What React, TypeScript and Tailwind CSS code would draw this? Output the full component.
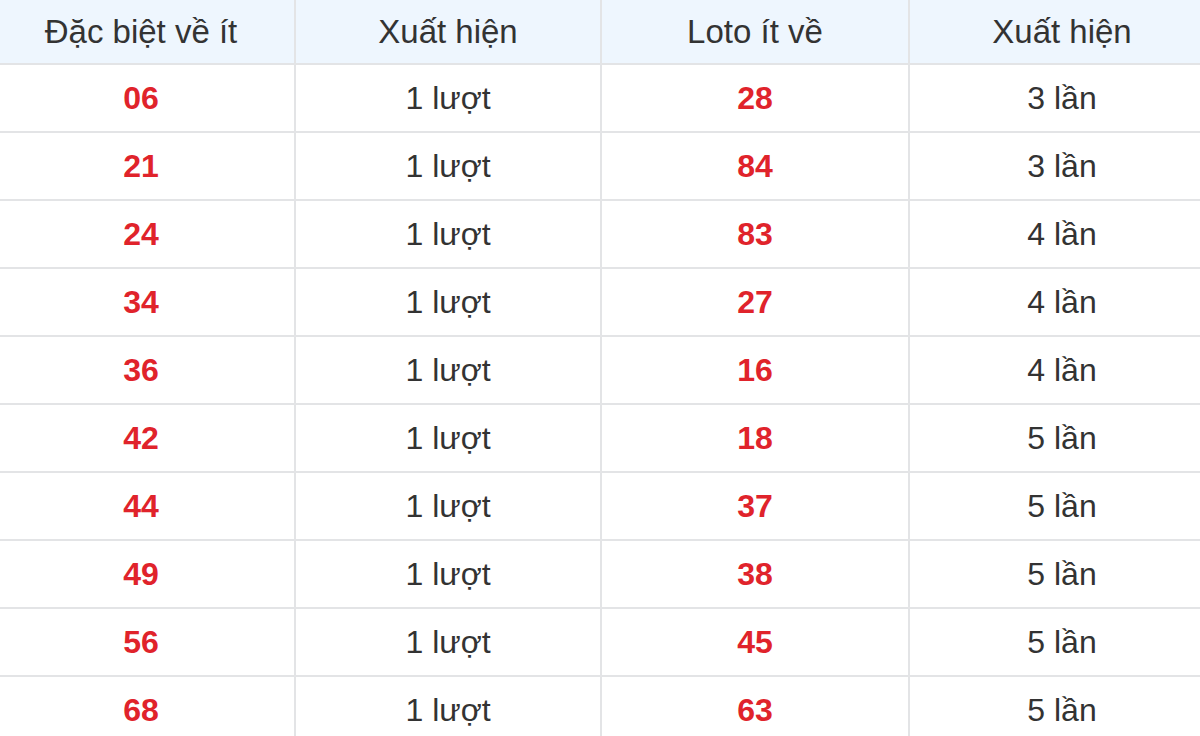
const rows = [
  ['06', '1 lượt', '28', '3 lần'],
  ['21', '1 lượt', '84', '3 lần'],
  ['24', '1 lượt', '83', '4 lần'],
  ['34', '1 lượt', '27', '4 lần'],
  ['36', '1 lượt', '16', '4 lần'],
  ['42', '1 lượt', '18', '5 lần'],
  ['44', '1 lượt', '37', '5 lần'],
  ['49', '1 lượt', '38', '5 lần'],
  ['56', '1 lượt', '45', '5 lần'],
  ['68', '1 lượt', '63', '5 lần'],
]

const heads = ['Đặc biệt về ít', 'Xuất hiện', 'Loto ít về', 'Xuất hiện']

export default function App() {
  return (
    <div className="w-[1200px] h-[736px] overflow-hidden bg-white font-['Liberation_Sans',Arial,sans-serif] text-[32px] text-[#333]">
      <div className="-ml-[12px] w-[1226px]">
        <div className="grid grid-cols-[306px_306px_308px_306px] h-[63px] bg-[#eef6fe] text-[33px]">
          {heads.map((h, i) => (
            <div key={i} className={`flex items-center justify-center ${i > 0 ? 'border-l-2 border-[#e3e4e6]' : ''}`}>
              {h}
            </div>
          ))}
        </div>
        {rows.map((r, idx) => (
          <div key={idx} className="grid grid-cols-[306px_306px_308px_306px] h-[68px] border-t-2 border-[#e3e4e6]">
            {r.map((c, i) => (
              <div
                key={i}
                className={`flex items-center justify-center ${i > 0 ? 'border-l-2 border-[#e3e4e6]' : ''} ${i % 2 === 0 ? 'font-bold text-[#e0232b]' : ''}`}
              >
                {c}
              </div>
            ))}
          </div>
        ))}
      </div>
    </div>
  )
}
